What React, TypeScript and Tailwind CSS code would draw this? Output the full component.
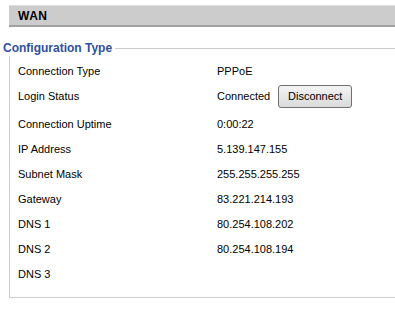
const rows: { label: string; value?: string; button?: boolean }[] = [
  { label: "Connection Type", value: "PPPoE" },
  { label: "Login Status", value: "Connected", button: true },
  { label: "Connection Uptime", value: "0:00:22" },
  { label: "IP Address", value: "5.139.147.155" },
  { label: "Subnet Mask", value: "255.255.255.255" },
  { label: "Gateway", value: "83.221.214.193" },
  { label: "DNS 1", value: "80.254.108.202" },
  { label: "DNS 2", value: "80.254.108.194" },
  { label: "DNS 3" },
];

export default function App() {
  return (
    <div className="w-[395px] h-[309px] overflow-hidden bg-white text-[11px] text-black font-['Liberation_Sans',Arial,sans-serif]">
      <div className="pt-[5px] pl-[9px]">
        <div className="h-[22px] bg-[#cccccc] border-t border-t-[#dcdcdc] border-b-2 border-b-[#a0a0a0] pl-[9px] flex items-center font-bold text-[12px] tracking-[0.5px]">
          WAN
        </div>
      </div>
      <fieldset className="ml-[9px] mt-[14px] border-l border-t border-b border-[#cccccc] pl-[8px] pb-[10px] min-w-0">
        <legend className="-ml-[15px] pr-[3px] text-[#2f4f9f] font-bold text-[12px] leading-[15px]">
          Configuration Type
        </legend>
        <div className="pt-[3px]">
          {rows.map((r) => (
            <div
              key={r.label}
              className={`flex items-center h-[25px] ${r.button ? "mb-[3px]" : ""}`}
            >
              <div className="w-[199px]">{r.label}</div>
              <div className="flex items-center gap-[8px]">
                {r.value}
                {r.button && (
                  <button className="h-[23px] w-[74px] border border-[#707070] rounded-[3px] bg-gradient-to-b from-[#f4f4f4] to-[#dadada] text-[11px]">
                    Disconnect
                  </button>
                )}
              </div>
            </div>
          ))}
        </div>
      </fieldset>
    </div>
  );
}
